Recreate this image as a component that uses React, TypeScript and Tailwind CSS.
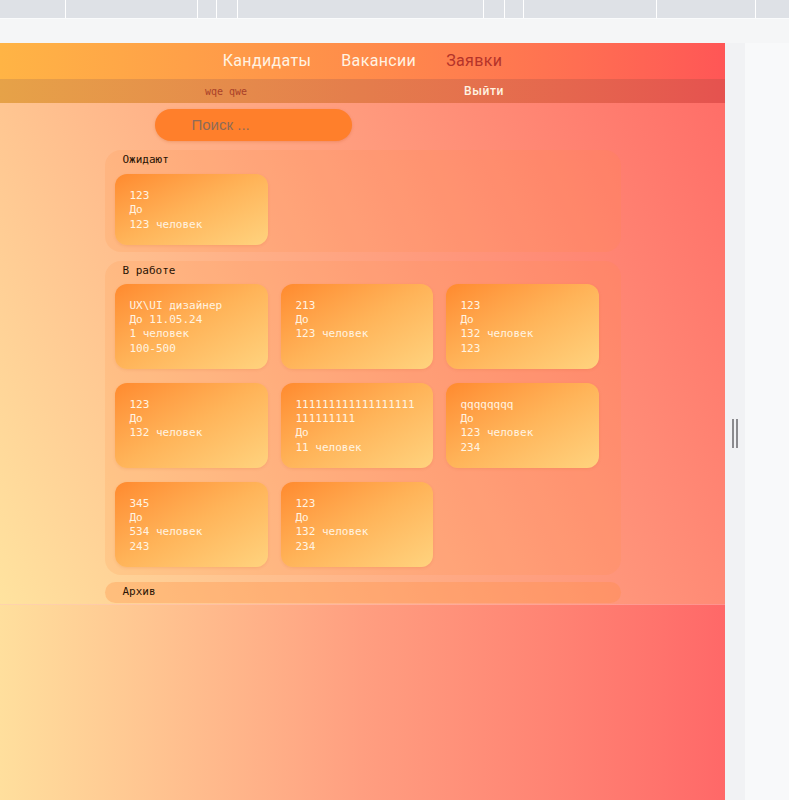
const mono = "font-['DejaVu_Sans_Mono','Liberation_Mono',monospace]";

const waiting = [["123", "До", "123 человек"]];

const inWork = [
  ["UX\\UI дизайнер", "До 11.05.24", "1 человек", "100-500"],
  ["213", "До", "123 человек"],
  ["123", "До", "132 человек", "123"],
  ["123", "До", "132 человек"],
  ["111111111111111111111111111", "До", "11 человек"],
  ["qqqqqqqq", "До", "123 человек", "234"],
  ["345", "До", "534 человек", "243"],
  ["123", "До", "132 человек", "234"],
];

// ruler segments of the top toolbar
const ticks = [66, 132, 19, 21, 246, 21, 19, 133, 99, 33];

function Card({ lines }: { lines: string[] }) {
  return (
    <div
      className={`rounded-xl bg-gradient-to-br from-[#ff8a2e] via-[#ffb459] to-[#ffd37e] px-[15px] pb-[13px] pt-[15px] text-[11px] leading-[14.25px] text-[#fff4e2] shadow-[0_1px_3px_rgba(200,90,30,0.15)] ${mono}`}
    >
      {lines.map((l, i) => (
        <p key={i} className="break-all">
          {l}
        </p>
      ))}
    </div>
  );
}

function Panel({ title, children }: { title: string; children?: React.ReactNode }) {
  return (
    <div className="rounded-2xl bg-[#ff8a3d]/15 pb-[7px] pl-[10px]">
      <h3 className={`pl-[8px] pt-[3px] text-[11px] leading-[14px] text-[#2a1404] ${mono}`}>{title}</h3>
      {children}
    </div>
  );
}

export default function App() {
  return (
    <div className="flex h-[800px] w-[789px] flex-col overflow-hidden bg-[#f6f7f8]">
      <div className="flex h-[18px] shrink-0 bg-[#dee1e6]">
        {ticks.map((w, i) => (
          <div
            key={i}
            style={{ width: w }}
            className={i < ticks.length - 1 ? "border-r border-white" : ""}
          />
        ))}
      </div>
      <div className="h-[25px] shrink-0 border-t border-[#fafbfc] bg-[#f5f6f7]" />

      <div className="flex flex-1">
        <div className="flex w-[725px] flex-col bg-gradient-to-r from-[#ffdf9d] via-[#ff9e80] to-[#ff6868]">
          <nav className="flex h-[36px] items-center justify-center gap-[30px] bg-gradient-to-r from-[#ffb445] via-[#ff8c4a] to-[#ff5656] font-['Roboto',sans-serif] text-[16px] tracking-[0.35px]">
            <a className="text-[#fff3e2]">Кандидаты</a>
            <a className="text-[#fff3e2]">Вакансии</a>
            <a className="text-[#b5332a]">Заявки</a>
          </nav>
          <div className="flex h-[24px] items-center justify-between bg-gradient-to-r from-[#e6a248] via-[#e47d4c] to-[#e5524f] pl-[205px] pr-[221px]">
            <span className={`text-[10px] text-[#a94129] ${mono}`}>wqe qwe</span>
            <span className="font-['Roboto',sans-serif] text-[12px] font-medium tracking-[0.6px] text-[#fff3e2]">
              Выйти
            </span>
          </div>

          <section className="border-b border-white/25 bg-[linear-gradient(65deg,#ffe39f,#ffa783,#ff6e68)] pb-[1px] pt-[6px]">
            <div className="mx-auto flex w-[516px] flex-col">
              <div className="ml-[50px] flex h-[32px] w-[197px] items-center rounded-full bg-[#ff7f2b] pl-[37px] font-['Liberation_Sans',sans-serif] text-[15px] text-[#8d6b58] shadow-[0_1px_3px_rgba(190,80,20,0.25)]">
                Поиск ...
              </div>

              <div className="mt-[9px]">
                <Panel title="Ожидают">
                  <div className="mt-[7px] w-[153px]">
                    {waiting.map((l, i) => (
                      <Card key={i} lines={l} />
                    ))}
                  </div>
                </Panel>
              </div>

              <div className="mt-[9px]">
                <Panel title="В работе">
                  <div className="mt-[6px] grid grid-cols-[153px_152px_153px] gap-x-[13px] gap-y-[14px] pb-[1px]">
                    {inWork.map((l, i) => (
                      <Card key={i} lines={l} />
                    ))}
                  </div>
                </Panel>
              </div>

              <div className="mt-[7px] flex h-[21px] items-center rounded-[11px] bg-[#ff8a3d]/30 pl-[18px]">
                <h3 className={`text-[11px] text-[#2a1404] ${mono}`}>Архив</h3>
              </div>
            </div>
          </section>
        </div>

        <div className="flex w-[20px] items-center justify-center bg-[#f1f2f4]">
          <div className="mt-[24px] flex gap-[2px]">
            <div className="h-[29px] w-[2px] bg-[#8b8b8e]" />
            <div className="h-[29px] w-[2px] bg-[#8b8b8e]" />
          </div>
        </div>
        <div className="flex-1 bg-[#f8f9fa]" />
      </div>
    </div>
  );
}
